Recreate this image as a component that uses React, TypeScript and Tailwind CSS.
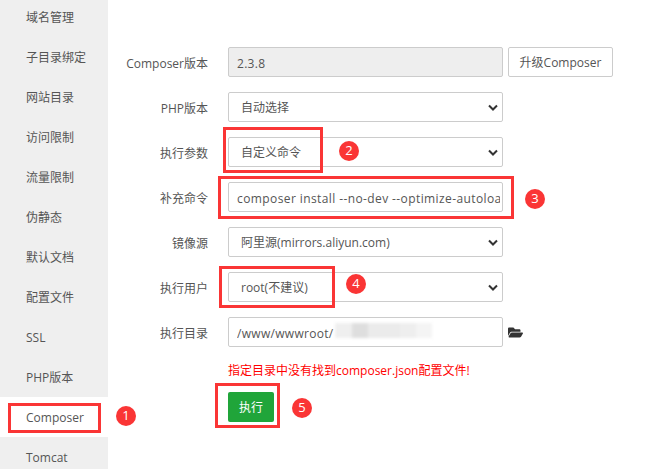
import { FaFolderOpen } from "react-icons/fa";

const menu = ["域名管理", "子目录绑定", "网站目录", "访问限制", "流量限制", "伪静态", "默认文档", "配置文件", "SSL", "PHP版本", "Composer", "Tomcat"];

function Row({ label, children }: { label: string; children: React.ReactNode }) {
  return (
    <div className="flex items-center h-[30px] mb-[15px]">
      <label className="w-[100px] mr-[20px] text-right text-[#555] pt-[4px]">{label}</label>
      {children}
    </div>
  );
}

function Select({ value }: { value: string }) {
  return (
    <div className="relative w-[275px] h-[30px]">
      <select className="w-full h-full appearance-none bg-white border border-[#ccc] rounded-[2px] pl-[12px] pr-6 pt-[2px] text-[#555] outline-none">
        <option>{value}</option>
      </select>
      <svg className="absolute right-[5px] top-[12px] w-[10px] h-[8px]" viewBox="0 0 10 8" fill="none">
        <path d="M1 1.5 L5 5.5 L9 1.5" stroke="#333" strokeWidth="2" />
      </svg>
    </div>
  );
}

function Badge({ n, className }: { n: number; className: string }) {
  return (
    <div className={`absolute w-[20px] h-[20px] rounded-full bg-[#fa3535] text-white text-[13px] flex items-center justify-center ${className}`}>
      {n}
    </div>
  );
}

export default function App() {
  return (
    <div className="relative w-[653px] h-[469px] overflow-hidden bg-white flex text-[12px] font-['Open_Sans','Noto_Sans_CJK_SC',sans-serif]">
      <div className="w-[108px] shrink-0 bg-[#efefef] -mt-[3px] h-[520px]">
        {menu.map((m) => (
          <div key={m} className={`h-[40px] flex items-center pt-[2px] pl-[26px] text-[#555] ${m === "Composer" ? "bg-white" : ""}`}>
            {m}
          </div>
        ))}
      </div>

      <div className="flex-1 pt-[47px]">
        <Row label="Composer版本">
          <input readOnly value="2.3.8" className="w-[275px] h-[30px] bg-[#eee] border border-[#ccc] rounded-[2px] pl-[8px] pr-[2px] pt-[2px] tracking-[0.3px] text-[#555] outline-none" />
          <button className="ml-[5px] w-[105px] h-[30px] pt-[2px] bg-white border border-[#ccc] rounded-[2px] text-[#555]">升级Composer</button>
        </Row>
        <Row label="PHP版本"><Select value="自动选择" /></Row>
        <Row label="执行参数"><Select value="自定义命令" /></Row>
        <Row label="补充命令">
          <input readOnly value="composer install --no-dev --optimize-autoload" className="w-[275px] h-[30px] bg-white border border-[#ccc] rounded-[2px] pl-[8px] pr-[2px] pt-[2px] tracking-[0.4px] text-[#555] outline-none" />
        </Row>
        <Row label="镜像源"><Select value="阿里源(mirrors.aliyun.com)" /></Row>
        <Row label="执行用户"><Select value="root(不建议)" /></Row>
        <Row label="执行目录">
          <div className="relative w-[275px] h-[30px]">
            <input readOnly value="/www/wwwroot/" className="w-full h-full bg-white border border-[#ccc] rounded-[2px] pl-[8px] pr-[2px] pt-[2px] tracking-[0.3px] text-[#555] outline-none" />
            <div className="absolute left-[107px] top-[6px] flex h-[15px] blur-[1.5px]">
              <div className="w-[17px] bg-[#efefef]" />
              <div className="w-[16px] bg-[#dedede]" />
              <div className="w-[32px] bg-[#ebebeb]" />
              <div className="w-[16px] bg-[#eeeeee]" />
              <div className="w-[16px] bg-[#f4f4f4]" />
            </div>
          </div>
          <FaFolderOpen className="ml-[5px] w-[15px] h-[15px] text-[#333]" />
        </Row>
        <div className="pl-[120px] -mt-[1px] h-[20px] leading-[20px] text-[#f00]">指定目录中没有找到composer.json配置文件!</div>
        <div className="pl-[120px] mt-[11px]">
          <button className="w-[46px] h-[30px] pt-[2px] bg-[#20a53a] text-white rounded-[2px]">执行</button>
        </div>
      </div>

      <div className="absolute left-[8px] top-[403px] w-[93px] h-[30px] border-[3px] border-[#fa3535]" />
      <div className="absolute left-[223px] top-[127px] w-[100px] h-[46px] border-[3px] border-[#fa3535]" />
      <div className="absolute left-[218px] top-[176px] w-[296px] h-[43px] border-[3px] border-[#fa3535]" />
      <div className="absolute left-[219px] top-[266px] w-[116px] h-[42px] border-[3px] border-[#fa3535]" />
      <div className="absolute left-[215px] top-[383px] w-[65px] h-[45px] border-[3px] border-[#fa3535]" />

      <Badge n={1} className="left-[116px] top-[406px]" />
      <Badge n={2} className="left-[339px] top-[141px]" />
      <Badge n={3} className="left-[525px] top-[189px]" />
      <Badge n={4} className="left-[346px] top-[274px]" />
      <Badge n={5} className="left-[292px] top-[398px]" />
    </div>
  );
}
